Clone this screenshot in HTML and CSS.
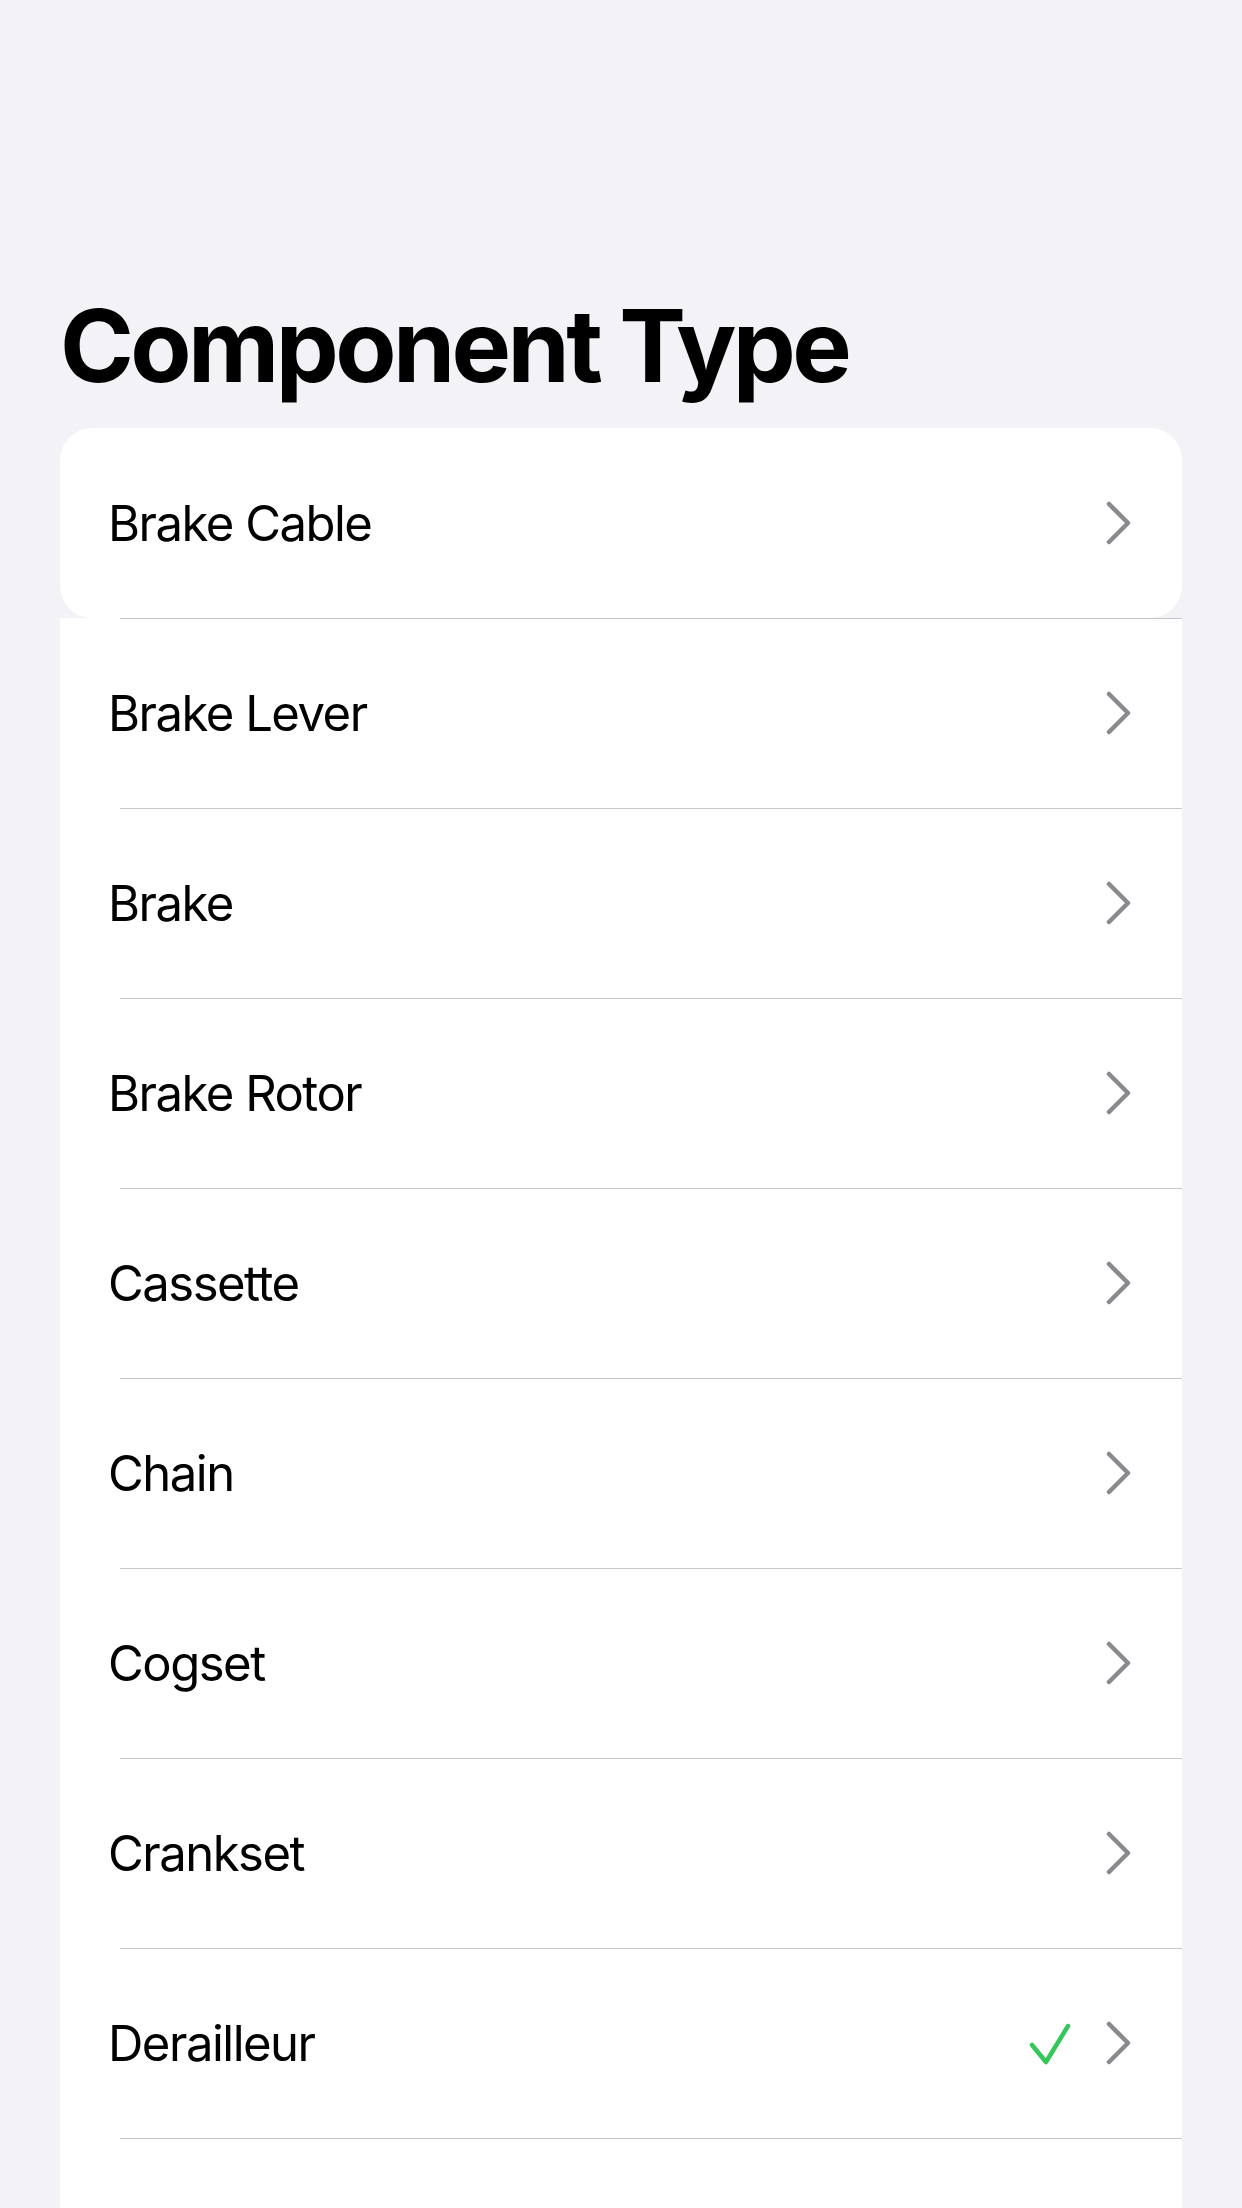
FILE: index.html
```html
<!DOCTYPE html>
<html lang="en">
<head>
<meta charset="utf-8">
<title>Component Type</title>
<link rel="stylesheet" href="styles.css">
</head>
<body>
<div class="screen">
  <h1 class="title">Component Type</h1>
  <div class="list">
    <div class="row first">
      <span class="label">Brake Cable</span>
      <svg class="chev" width="27" height="44" viewBox="0 0 27 44"><polyline points="3,3 22,22 3,41" /></svg>
    </div>
    <div class="group">
      <div class="row sep">
        <span class="label">Brake Lever</span>
        <svg class="chev" width="27" height="44" viewBox="0 0 27 44"><polyline points="3,3 22,22 3,41" /></svg>
      </div>
      <div class="row sep">
        <span class="label">Brake</span>
        <svg class="chev" width="27" height="44" viewBox="0 0 27 44"><polyline points="3,3 22,22 3,41" /></svg>
      </div>
      <div class="row sep">
        <span class="label">Brake Rotor</span>
        <svg class="chev" width="27" height="44" viewBox="0 0 27 44"><polyline points="3,3 22,22 3,41" /></svg>
      </div>
      <div class="row sep">
        <span class="label">Cassette</span>
        <svg class="chev" width="27" height="44" viewBox="0 0 27 44"><polyline points="3,3 22,22 3,41" /></svg>
      </div>
      <div class="row sep">
        <span class="label">Chain</span>
        <svg class="chev" width="27" height="44" viewBox="0 0 27 44"><polyline points="3,3 22,22 3,41" /></svg>
      </div>
      <div class="row sep">
        <span class="label">Cogset</span>
        <svg class="chev" width="27" height="44" viewBox="0 0 27 44"><polyline points="3,3 22,22 3,41" /></svg>
      </div>
      <div class="row sep">
        <span class="label">Crankset</span>
        <svg class="chev" width="27" height="44" viewBox="0 0 27 44"><polyline points="3,3 22,22 3,41" /></svg>
      </div>
      <div class="row sep">
        <span class="label">Derailleur</span>
        <svg class="check" width="44" height="44" viewBox="0 0 44 44"><polyline points="4,24 18,41 40,5" /></svg>
        <svg class="chev" width="27" height="44" viewBox="0 0 27 44"><polyline points="3,3 22,22 3,41" /></svg>
      </div>
      <div class="row sep"></div>
    </div>
  </div>
</div>
</body>
</html>
```
FILE: styles.css
```css
html, body {
  margin: 0;
  padding: 0;
}
body {
  background: #f2f2f7;
  font-family: Inter, "Liberation Sans", sans-serif;
  color: #000;
}
.screen {
  width: 1242px;
  height: 2208px;
  overflow: hidden;
}
.title {
  margin: 0 0 32px 60px;
  padding-top: 296px;
  font-size: 100px;
  line-height: 100px;
  font-weight: 700;
  letter-spacing: -3.6px;
}
.list {
  margin: 0 60px;
}
.row {
  height: 190px;
  display: flex;
  align-items: center;
  padding-left: 48px;
  padding-right: 49px;
  box-sizing: border-box;
  background: #fff;
}
.row.first {
  border-radius: 32px;
}
.group {
  background: #fff;
}
.row.sep {
  background: linear-gradient(#c6c6c8, #c6c6c8) no-repeat 60px 0 / calc(100% - 60px) 1px, #fff;
}
.label {
  flex: 1;
  font-size: 49px;
  font-weight: 400;
  letter-spacing: -1.5px;
}
.chev polyline {
  fill: none;
  stroke: #8a8a8e;
  stroke-width: 4.5;
  stroke-linecap: round;
  stroke-linejoin: round;
}
.check {
  margin-right: 34px;
}
.check polyline {
  fill: none;
  stroke: #34c759;
  stroke-width: 4.5;
  stroke-linecap: round;
  stroke-linejoin: round;
}
```
